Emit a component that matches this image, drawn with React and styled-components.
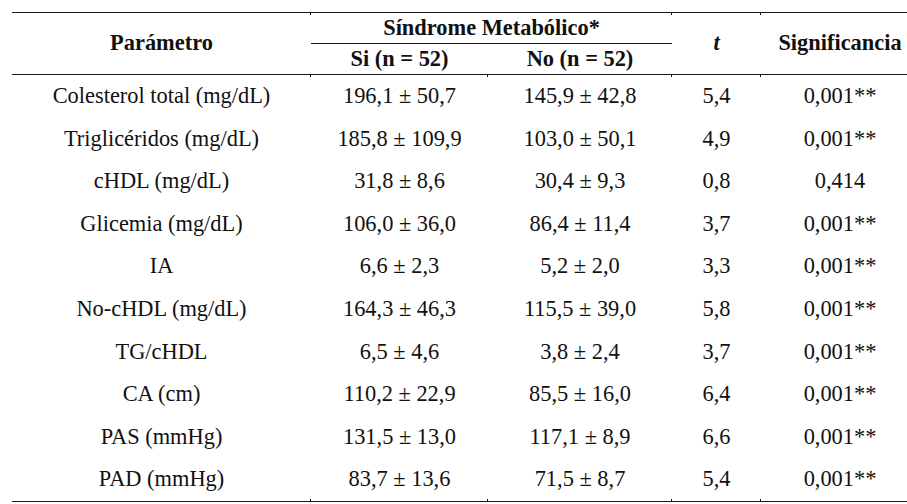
import React from 'react';
import styled, { createGlobalStyle, css } from 'styled-components';

const GlobalStyle = createGlobalStyle`
  html, body {
    margin: 0;
    padding: 0;
    background: #ffffff;
    overflow: hidden;
  }
  body {
    width: 907px;
    height: 504px;
  }
`;

const rows = [
  ['Colesterol total (mg/dL)', '196,1 ± 50,7', '145,9 ± 42,8', '5,4', '0,001**'],
  ['Triglicéridos (mg/dL)', '185,8 ± 109,9', '103,0 ± 50,1', '4,9', '0,001**'],
  ['cHDL (mg/dL)', '31,8 ± 8,6', '30,4 ± 9,3', '0,8', '0,414'],
  ['Glicemia (mg/dL)', '106,0 ± 36,0', '86,4 ± 11,4', '3,7', '0,001**'],
  ['IA', '6,6 ± 2,3', '5,2 ± 2,0', '3,3', '0,001**'],
  ['No-cHDL (mg/dL)', '164,3 ± 46,3', '115,5 ± 39,0', '5,8', '0,001**'],
  ['TG/cHDL', '6,5 ± 4,6', '3,8 ± 2,4', '3,7', '0,001**'],
  ['CA (cm)', '110,2 ± 22,9', '85,5 ± 16,0', '6,4', '0,001**'],
  ['PAS (mmHg)', '131,5 ± 13,0', '117,1 ± 8,9', '6,6', '0,001**'],
  ['PAD (mmHg)', '83,7 ± 13,6', '71,5 ± 8,7', '5,4', '0,001**'],
];

const Page = styled.div`
  padding: 12px 0 0 12px;
`;

const Table = styled.table`
  width: 907px;
  border-collapse: collapse;
  table-layout: fixed;
  font-family: "Liberation Serif", "Times New Roman", serif;
  font-size: 22.4px;
  color: #111;
  border-top: 1px solid #1a1a1a;
  border-bottom: 1px solid #1a1a1a;
`;

const Head = styled.thead`
  border-bottom: 1px solid #1a1a1a;
`;

// little stubs of the column borders where they meet a rule
const tick = where => css`
  content: '';
  position: absolute;
  left: -1px;
  ${where}: -1px;
  width: 1px;
  height: 3px;
  background: #1a1a1a;
`;

const Th = styled.th`
  position: relative;
  font-weight: bold;
  font-style: ${p => (p.$italic ? 'italic' : 'normal')};
  text-align: center;
  padding: 0;
  height: 30px;
  line-height: 1;
  vertical-align: middle;
  border-bottom: ${p => (p.$rule ? '1px solid #1a1a1a' : 'none')};
  ${p => p.$tickTop && css`&::before { ${tick('top')} }`}
`;

const Td = styled.td`
  position: relative;
  text-align: center;
  padding: 0;
  height: 42.6px;
  line-height: 1;
  vertical-align: middle;
  white-space: nowrap;
  ${p => p.$tickTop && css`&::before { ${tick('top')} }`}
  ${p => p.$tickBottom && css`&::after { ${tick('bottom')} }`}
`;

export default function App() {
  return (
    <>
      <GlobalStyle />
      <Page>
        <Table>
          <colgroup>
            <col style={{ width: 299 }} />
            <col style={{ width: 177 }} />
            <col style={{ width: 184 }} />
            <col style={{ width: 89 }} />
            <col style={{ width: 158 }} />
          </colgroup>
          <Head>
            <tr>
              <Th rowSpan={2}>Parámetro</Th>
              <Th colSpan={2} $rule $tickTop>Síndrome Metabólico*</Th>
              <Th rowSpan={2} $italic $tickTop>t</Th>
              <Th rowSpan={2} $tickTop>Significancia</Th>
            </tr>
            <tr>
              <Th>Si (n = 52)</Th>
              <Th>No (n = 52)</Th>
            </tr>
          </Head>
          <tbody>
            {rows.map((r, ri) => (
              <tr key={r[0]}>
                {r.map((c, i) => (
                  <Td
                    key={i}
                    $tickTop={ri === 0 && i > 0}
                    $tickBottom={ri === rows.length - 1 && i > 0}
                  >
                    {c}
                  </Td>
                ))}
              </tr>
            ))}
          </tbody>
        </Table>
      </Page>
    </>
  );
}
